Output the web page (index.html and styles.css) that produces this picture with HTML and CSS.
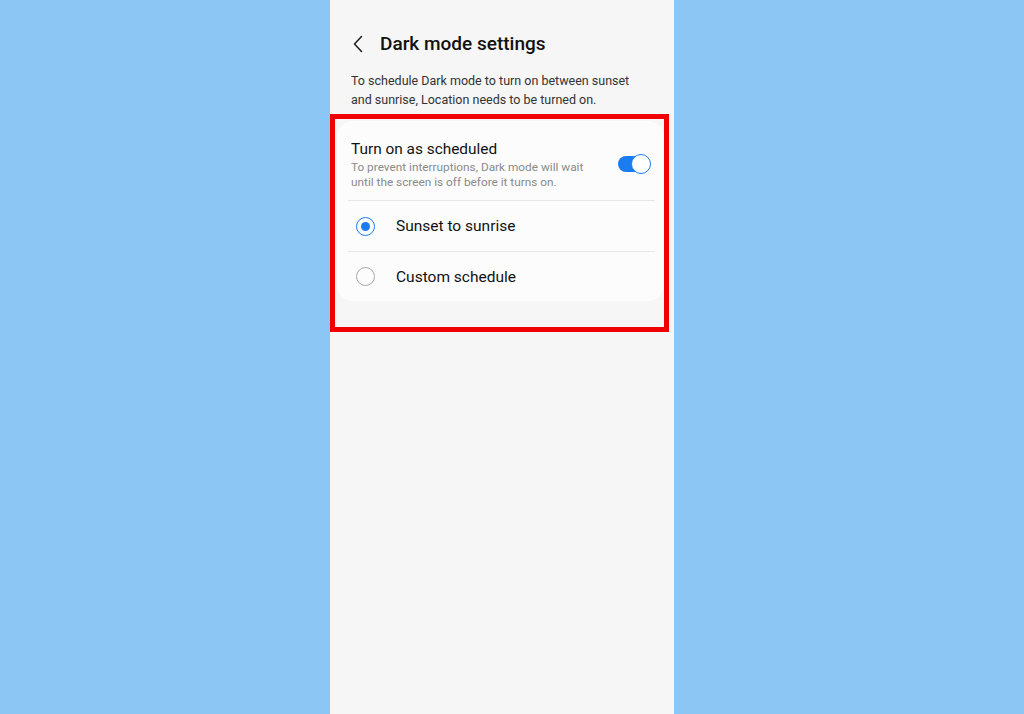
FILE: index.html
```html
<!DOCTYPE html>
<html>
<head>
<meta charset="utf-8">
<link rel="stylesheet" href="styles.css">
</head>
<body>
<div class="phone">
  <div class="header">
    <svg class="back" width="12" height="18" viewBox="0 0 12 18"><path d="M9.5 1.5 L2.5 9 L9.5 16.5" fill="none" stroke="#222" stroke-width="1.6" stroke-linecap="round" stroke-linejoin="round"/></svg>
    <h1 class="title">Dark mode settings</h1>
  </div>
  <p class="desc">To schedule Dark mode to turn on between sunset and sunrise, Location needs to be turned on.</p>
  <div class="highlight">
    <div class="card">
      <div class="row toggle-row">
        <div class="texts">
          <div class="row-title">Turn on as scheduled</div>
          <div class="row-sub">To prevent interruptions, Dark mode will wait until the screen is off before it turns on.</div>
        </div>
        <div class="switch"><span class="thumb"></span></div>
      </div>
      <div class="divider"></div>
      <div class="row radio-row">
        <span class="radio on"></span>
        <span class="label">Sunset to sunrise</span>
      </div>
      <div class="divider"></div>
      <div class="row radio-row last">
        <span class="radio"></span>
        <span class="label">Custom schedule</span>
      </div>
    </div>
  </div>
</div>
</body>
</html>
```
FILE: styles.css
```css
html, body {
  margin: 0;
  padding: 0;
  height: 100%;
}
body {
  background: #8bc6f4;
  font-family: Roboto, "Liberation Sans", sans-serif;
  overflow: hidden;
}
.phone {
  margin-left: 330px;
  width: 344px;
  height: 714px;
  background: #f6f6f6;
  box-sizing: border-box;
  padding-top: 33px;
}
.header {
  display: flex;
  align-items: center;
  height: 22px;
  padding-left: 22px;
}
.back {
  display: block;
}
.title {
  margin: 0 0 0 16px;
  font-size: 19px;
  font-weight: 500;
  color: #111;
  line-height: 22px;
}
.desc {
  margin: 16px 0 0 0;
  padding: 0 40px 0 21px;
  font-size: 12.5px;
  line-height: 19px;
  color: #333;
}
.highlight {
  margin-top: 5px;
  width: 339px;
  box-sizing: border-box;
  border: 5px solid #f00000;
  padding: 2px 0 26px 2px;
}
.card {
  background: #fcfcfc;
  border-radius: 16px;
  width: 327px;
  padding: 0 8px 0 11px;
  box-sizing: border-box;
}
.row {
  display: flex;
  align-items: center;
}
.toggle-row {
  padding: 18px 0 10px 3px;
  justify-content: space-between;
}
.row-title {
  font-size: 15.4px;
  line-height: 20px;
  color: #111;
}
.row-sub {
  font-size: 11.8px;
  line-height: 15px;
  color: #8a8a8a;
  width: 245px;
  margin-top: 1px;
}
.switch {
  position: relative;
  width: 33px;
  height: 20px;
  margin-right: 5px;
  margin-top: -2px;
}
.switch::before {
  content: "";
  position: absolute;
  left: 0;
  top: 2px;
  width: 26px;
  height: 16px;
  border-radius: 8px;
  background: #1a7cf0;
}
.thumb {
  position: absolute;
  right: 0;
  top: 0;
  width: 20px;
  height: 20px;
  box-sizing: border-box;
  border-radius: 50%;
  background: #fff;
  border: 1.5px solid #1a7cf0;
}
.divider {
  height: 1px;
  background: #e6e6e6;
  margin: 0 1px 0 0;
}
.radio-row {
  height: 50px;
}
.radio-row.last {
  height: 49px;
}
.radio {
  width: 19px;
  height: 19px;
  box-sizing: border-box;
  border-radius: 50%;
  border: 1.5px solid #a9a9a9;
  margin-left: 8px;
  display: flex;
  align-items: center;
  justify-content: center;
}
.radio.on {
  border: 1.8px solid #1a7cf0;
}
.radio.on::after {
  content: "";
  width: 9px;
  height: 9px;
  border-radius: 50%;
  background: #1a7cf0;
}
.label {
  margin-left: 21px;
  font-size: 15.5px;
  color: #111;
}
```
